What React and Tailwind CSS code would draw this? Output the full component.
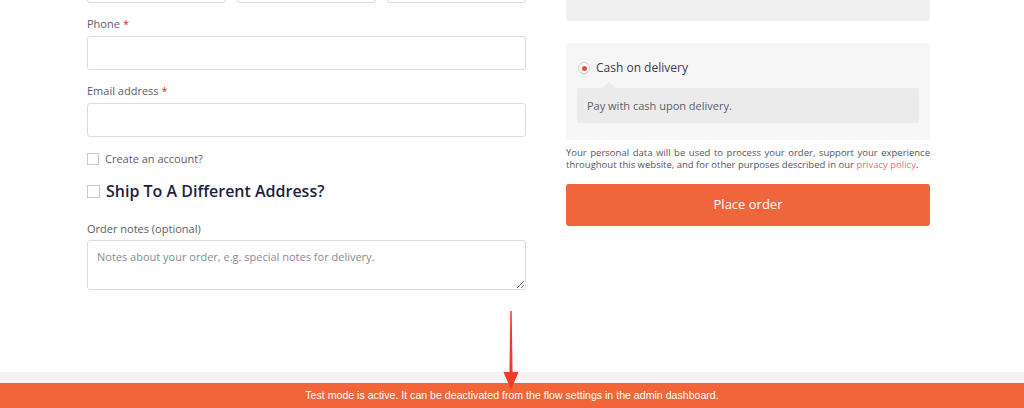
import React from "react";

const Label = ({ children, required }) => (
  <label className="block text-[11px] leading-4 text-[#5c5c6a]">
    {children}
    {required && <span className="text-[#e02b27] ml-[3px]">*</span>}
  </label>
);

const Input = ({ className = "" }) => (
  <input
    type="text"
    className={`block w-full h-[34px] border border-[#dcdcdc] rounded-[3px] bg-white outline-none ${className}`}
  />
);

const App = () => {
  return (
    <div
      className="relative w-[1024px] h-[408px] overflow-hidden bg-white"
      style={{ fontFamily: '"Open Sans", "Noto Sans", sans-serif' }}
    >
      <div className="flex pl-[87px] h-[372px]">
        {/* Left column: billing form */}
        <div className="w-[439px]">
          <div className="grid grid-cols-3 gap-[11px] -mt-[31px]">
            <Input />
            <Input />
            <Input />
          </div>

          <div className="mt-[13px]">
            <Label required>Phone</Label>
            <div className="mt-[4px]">
              <Input />
            </div>
          </div>

          <div className="mt-[13px]">
            <Label required>Email address</Label>
            <div className="mt-[4px]">
              <Input />
            </div>
          </div>

          <div className="mt-[14px] flex items-center gap-[6px]">
            <span className="w-[12px] h-[12px] border border-[#c8c8c8] bg-white"></span>
            <span className="text-[11px] leading-4 text-[#5c5c6a]">
              Create an account?
            </span>
          </div>

          <div className="mt-[12px] flex items-center gap-[6px]">
            <span className="w-[13px] h-[13px] border border-[#c8c8c8] bg-white"></span>
            <span className="text-[16px] leading-6 font-semibold text-[#1d1f3f]">
              Ship To A Different Address?
            </span>
          </div>

          <div className="mt-[18px]">
            <Label>Order notes (optional)</Label>
            <textarea
              placeholder="Notes about your order, e.g. special notes for delivery."
              className="mt-[3px] block w-full h-[50px] border border-[#dcdcdc] rounded-[3px] bg-white px-[9px] py-[8px] text-[11px] leading-4 text-[#5c5c6a] placeholder:text-[#8a8a94] outline-none"
            ></textarea>
          </div>
        </div>

        {/* Right column: payment */}
        <div className="ml-[40px] w-[364px]">
          <div className="h-[21px] bg-[#f0f0f0] rounded-b-[3px]"></div>

          <div className="mt-[22px] bg-[#f6f6f6] rounded-[3px] px-[11px] pt-[17px] pb-[17px]">
            <div className="flex items-center gap-[6px] pl-[1px]">
              <span className="w-[12px] h-[12px] rounded-full border border-[#cfcfcf] bg-white flex items-center justify-center">
                <span className="w-[5px] h-[5px] rounded-full bg-[#ef4b2b]"></span>
              </span>
              <span className="text-[12px] leading-4 text-[#3d3d52]">
                Cash on delivery
              </span>
            </div>
            <div className="relative mt-[12px] bg-[#ebebeb] rounded-[2px] h-[35px] flex items-center px-[10px]">
              <span className="absolute -top-[6px] left-[25px] w-0 h-0 border-l-[7px] border-r-[7px] border-b-[6px] border-l-transparent border-r-transparent border-b-[#ebebeb]"></span>
              <span className="text-[11px] leading-4 text-[#5c5c6a]">
                Pay with cash upon delivery.
              </span>
            </div>
          </div>

          <p className="mt-[7px] text-[9.5px] leading-[12px] text-[#55555f] text-justify">
            Your personal data will be used to process your order, support your
            experience throughout this website, and for other purposes described
            in our <a className="text-[#f2706e]">privacy policy</a>.
          </p>

          <button className="mt-[13px] w-full h-[42px] bg-[#f0663c] rounded-[3px] text-white text-[13px] font-medium">
            Place order
          </button>
        </div>
      </div>

      {/* Footer strip and test mode bar */}
      <div className="h-[11px] bg-[#f3f3f7]"></div>
      <div
        className="h-[25px] bg-[#f26539] flex items-center justify-center text-white text-[10.6px]"
        style={{ fontFamily: '"Liberation Sans", Arial, sans-serif' }}
      >
        Test mode is active. It can be deactivated from the flow settings in the
        admin dashboard.
      </div>

      {/* Annotation arrow */}
      <svg
        className="absolute left-[500px] top-[308px]"
        width="22"
        height="86"
        viewBox="0 0 22 86"
      >
        <polygon points="10.3,3 11.7,3 12.6,66 9.4,66" fill="#f23b2a" />
        <polygon points="3.5,64 18.5,64 11,82" fill="#f23b2a" />
      </svg>
    </div>
  );
};

export default App;
